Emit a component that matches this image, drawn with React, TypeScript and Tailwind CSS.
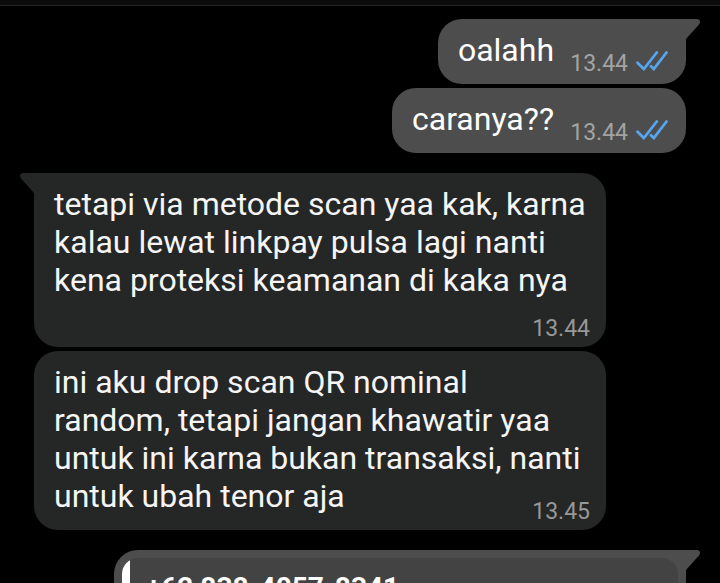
import React from 'react';
import { clsx } from 'clsx';

interface Message {
  id: number;
  text: string;
  time: string;
  outgoing?: boolean;
  tail?: boolean;
  timeBelow?: boolean;
}

const sent: Message[] = [
  { id: 1, text: 'oalahh', time: '13.44', outgoing: true, tail: true },
  { id: 2, text: 'caranya??', time: '13.44', outgoing: true },
];

const received: Message[] = [
  {
    id: 3,
    text: 'tetapi via metode scan yaa kak, karna kalau lewat linkpay pulsa lagi nanti kena proteksi keamanan di kaka nya',
    time: '13.44',
    tail: true,
    timeBelow: true,
  },
  {
    id: 4,
    text: 'ini aku drop scan QR nominal random, tetapi jangan khawatir yaa untuk ini karna bukan transaksi, nanti untuk ubah tenor aja',
    time: '13.45',
  },
];

const ReadTicks: React.FC = () => (
  <svg
    width="32"
    height="20"
    viewBox="0 0 32 20"
    fill="none"
    stroke="#57a5ee"
    strokeWidth="2.8"
    strokeLinecap="round"
    role="img"
    aria-label="Dibaca"
    className="mb-1.5"
  >
    <path d="M1.5 11.800L7.800 18L20.800 1.500" />
    <path d="M15 15.200L17.800 18L30.500 1.500" />
  </svg>
);

// Corner that sticks out at the top of the first bubble in a group
const Tail: React.FC<{ outgoing?: boolean }> = ({ outgoing }) => (
  <svg
    width="16"
    height="22"
    viewBox="0 0 16 22"
    aria-hidden="true"
    className={clsx(
      'absolute top-0',
      outgoing ? 'left-full -ml-0.5 fill-[#4d4d4d]' : 'right-full -mr-0.5 -scale-x-100 fill-[#252626]'
    )}
  >
    <path d="M0 0H13C16 0 17 3 15 5.500L2 20V22H0Z" />
  </svg>
);

const Bubble: React.FC<{ message: Message }> = ({ message }) => {
  const { text, time, outgoing, tail, timeBelow } = message;

  return (
    <li
      className={clsx(
        'relative grid max-w-[572px] rounded-3xl pl-5',
        outgoing ? 'self-end bg-[#4d4d4d] pr-[18px]' : 'self-start bg-[#252626] pr-4',
        tail && (outgoing ? 'rounded-tr-none' : 'rounded-tl-none')
      )}
    >
      {tail && <Tail outgoing={outgoing} />}
      <p
        className={clsx(
          'col-start-1 row-start-1 pt-3 text-[32px] leading-[38px]',
          outgoing ? 'pr-[114px] text-white' : 'pr-1 text-[#f5f5f5]',
          timeBelow ? 'pb-12' : 'pb-[15px]'
        )}
      >
        {text}
      </p>
      <div
        className={clsx(
          'col-start-1 row-start-1 flex items-center gap-2 self-end justify-self-end',
          outgoing ? 'pb-1.5 text-[#a3a3a3]' : 'pb-1 text-[#979898]'
        )}
      >
        <time className="text-[23px] leading-7">{time}</time>
        {outgoing && <ReadTicks />}
      </div>
    </li>
  );
};

const QuotedBubble: React.FC = () => (
  <li className="relative w-full max-w-[572px] self-end rounded-3xl rounded-tr-none bg-[#4d4d4d] p-2">
    <Tail outgoing />
    <div className="flex overflow-hidden rounded-2xl bg-[#434343]">
      <div className="w-2 shrink-0 bg-white" />
      <div className="px-4 py-[14px]">
        <p className="text-[28px] leading-8 font-bold text-white">+62 838-4057-8341</p>
      </div>
    </div>
  </li>
);

export default function App() {
  return (
    <div className="flex h-screen flex-col overflow-hidden bg-black font-[Roboto,sans-serif]">
      <header className="h-1.5 shrink-0 border-b border-[#242424] bg-[#0c0c0c]" />
      <main className="flex flex-col gap-5 pt-[13px] pr-[34px] pl-[34px]">
        <ul className="flex flex-col gap-1">
          {sent.map((message) => (
            <Bubble key={message.id} message={message} />
          ))}
        </ul>
        <ul className="flex flex-col gap-1">
          {received.map((message) => (
            <Bubble key={message.id} message={message} />
          ))}
        </ul>
        <ul className="flex flex-col gap-1">
          <QuotedBubble />
        </ul>
      </main>
    </div>
  );
}
